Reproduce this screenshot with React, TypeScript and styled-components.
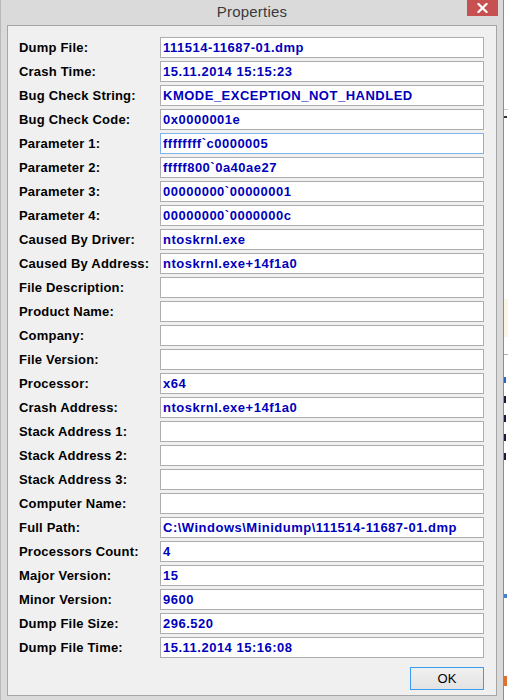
import React from "react";
import styled, { createGlobalStyle } from "styled-components";

const GlobalStyle = createGlobalStyle`
  html, body {
    margin: 0;
    padding: 0;
    background: #ffffff;
    overflow: hidden;
    font-family: "Liberation Sans", Arial, sans-serif;
  }
  * { box-sizing: border-box; }
`;

const Page = styled.div`
  display: flex;
  width: 508px;
  height: 700px;
`;

const Window = styled.div`
  flex: none;
  width: 504px;
  height: 700px;
  display: flex;
  flex-direction: column;
  background: #dadada;
  border-left: 1px solid #b8b8b8;
  border-right: 1px solid #8c8c8c;
  padding: 0 6px 4px 6px;
`;

const TitleBar = styled.div`
  height: 25px;
  margin: 0 -6px;
  display: grid;
  grid-template-columns: 1fr auto 1fr;
  flex: none;
`;

const Title = styled.div`
  grid-column: 2;
  font-family: "Liberation Sans", Arial, sans-serif;
  font-size: 15px;
  color: #3a3a3a;
  line-height: 23px;
  letter-spacing: 0.2px;
`;

const CloseButton = styled.div`
  grid-column: 3;
  justify-self: end;
  align-self: start;
  width: 31px;
  height: 16px;
  margin-right: 5px;
  background: #c75050;
  display: flex;
  align-items: center;
  justify-content: center;
`;

const Client = styled.div`
  flex: 1;
  background: #f0f0f0;
  border: 1px solid #a6a6a6;
  padding: 11px 12px 5px 11px;
  display: flex;
  flex-direction: column;
`;

const Fields = styled.div`
  display: grid;
  grid-template-columns: 141px 324px;
  grid-auto-rows: 21px;
  row-gap: 3px;
`;

const Label = styled.div`
  font-family: "Liberation Sans", Arial, sans-serif;
  font-weight: bold;
  font-size: 13px;
  letter-spacing: 0.2px;
  line-height: 21px;
  color: #000000;
  white-space: nowrap;
`;

const ValueBox = styled.div<{ $focused?: boolean }>`
  height: 21px;
  background: #ffffff;
  border: 1px solid ${(p) => (p.$focused ? "#7eb4ea" : "#adadad")};
  padding: 0 2px;
  font-family: "Liberation Sans", Arial, sans-serif;
  font-weight: bold;
  font-size: 13px;
  letter-spacing: 0.5px;
  line-height: 19px;
  color: #0000bc;
  white-space: nowrap;
  overflow: hidden;
`;

const Footer = styled.div`
  margin-top: 9px;
  display: flex;
  justify-content: flex-end;
`;

const OkButton = styled.button`
  width: 74px;
  height: 23px;
  border: 1px solid #3c9cef;
  background: linear-gradient(#f0f0f0, #e3e3e3);
  font-family: "Liberation Sans", Arial, sans-serif;
  font-size: 13px;
  color: #000000;
  padding: 0;
  margin: 0;
  border-radius: 0;
  line-height: 21px;
`;

const BgPane = styled.div`
  flex: 1;
  height: 700px;
  background: #ffffff;
  overflow: hidden;
  display: flex;
  flex-direction: column;
`;

const BgItem = styled.div<{ $top: number; $h: number; $color: string; $w?: number }>`
  margin-top: ${(p) => p.$top}px;
  height: ${(p) => p.$h}px;
  width: ${(p) => (p.$w ? `${p.$w}px` : "100%")};
  background: ${(p) => p.$color};
  flex: none;
`;

const fields: [string, string][] = [
  ["Dump File:", "111514-11687-01.dmp"],
  ["Crash Time:", "15.11.2014 15:15:23"],
  ["Bug Check String:", "KMODE_EXCEPTION_NOT_HANDLED"],
  ["Bug Check Code:", "0x0000001e"],
  ["Parameter 1:", "ffffffff`c0000005"],
  ["Parameter 2:", "fffff800`0a40ae27"],
  ["Parameter 3:", "00000000`00000001"],
  ["Parameter 4:", "00000000`0000000c"],
  ["Caused By Driver:", "ntoskrnl.exe"],
  ["Caused By Address:", "ntoskrnl.exe+14f1a0"],
  ["File Description:", ""],
  ["Product Name:", ""],
  ["Company:", ""],
  ["File Version:", ""],
  ["Processor:", "x64"],
  ["Crash Address:", "ntoskrnl.exe+14f1a0"],
  ["Stack Address 1:", ""],
  ["Stack Address 2:", ""],
  ["Stack Address 3:", ""],
  ["Computer Name:", ""],
  ["Full Path:", "C:\\Windows\\Minidump\\111514-11687-01.dmp"],
  ["Processors Count:", "4"],
  ["Major Version:", "15"],
  ["Minor Version:", "9600"],
  ["Dump File Size:", "296.520"],
  ["Dump File Time:", "15.11.2014 15:16:08"],
];

const bgItems: { top: number; h: number; color: string; w?: number }[] = [
  { top: 109, h: 1, color: "#c8c8c8" },
  { top: 6, h: 2, color: "#333333", w: 3 },
  { top: 181, h: 38, color: "#fbf6e6" },
  { top: 17, h: 1, color: "#b0b0b0" },
  { top: 22, h: 6, color: "#3060c0", w: 2 },
  { top: 13, h: 7, color: "#1a1a40", w: 2 },
  { top: 12, h: 7, color: "#1a1a40", w: 2 },
  { top: 12, h: 7, color: "#1a1a40", w: 2 },
  { top: 12, h: 7, color: "#1a1a40", w: 2 },
  { top: 134, h: 4, color: "#4a80d0", w: 3 },
  { top: 78, h: 10, color: "#e07030", w: 3 },
];

export default function App() {
  return (
    <>
      <GlobalStyle />
      <Page>
        <Window>
          <TitleBar>
            <Title>Properties</Title>
            <CloseButton>
              <svg width="11" height="10" viewBox="0 0 11 10">
                <path d="M1.5 1 L9.5 9 M9.5 1 L1.5 9" stroke="#ffffff" strokeWidth="2.2" strokeLinecap="square" />
              </svg>
            </CloseButton>
          </TitleBar>
          <Client>
            <Fields>
              {fields.map(([label, value], i) => (
                <React.Fragment key={label}>
                  <Label>{label}</Label>
                  <ValueBox $focused={i === 4}>{value}</ValueBox>
                </React.Fragment>
              ))}
            </Fields>
            <Footer>
              <OkButton>OK</OkButton>
            </Footer>
          </Client>
        </Window>
        <BgPane>
          {bgItems.map((b, i) => (
            <BgItem key={i} $top={b.top} $h={b.h} $color={b.color} $w={b.w} />
          ))}
        </BgPane>
      </Page>
    </>
  );
}
